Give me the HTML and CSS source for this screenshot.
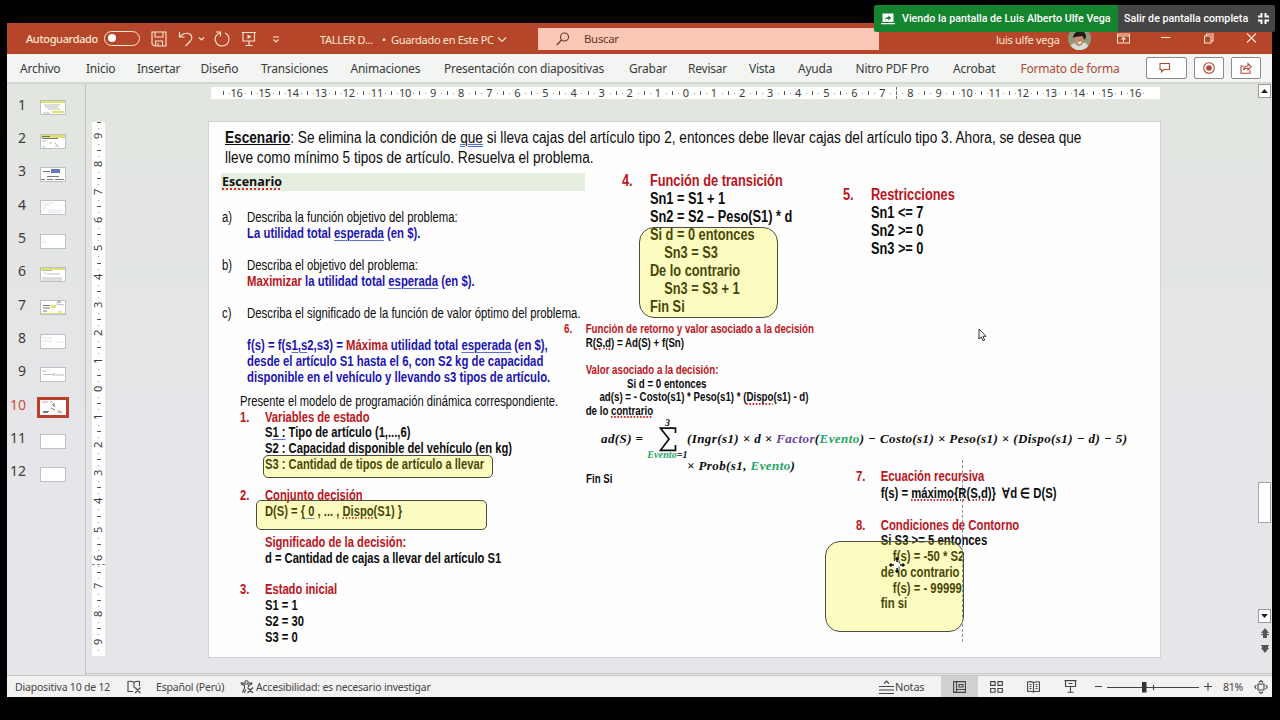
FILE: index.html
```
<!DOCTYPE html>
<html lang="es">
<head>
    <meta charset="UTF-8">
    <meta name="viewport" content="width=device-width, initial-scale=1.0">
    <title>TALLER D... - PowerPoint</title>
    <link rel="stylesheet" href="styles.css">
</head>
<body>
    <div class="window">
        <div class="titlebar">
            <span class="autosave">Autoguardado</span>
            <span class="toggle"></span>
            <svg width="16" height="16" viewBox="0 0 16 16"><path d="M1 1h14v14H3l-2-2zM4 1v5h8V1M4.500 15v-5h7v5M7 12v3"/></svg>
            <svg width="16" height="16" viewBox="0 0 16 16"><path d="M1.500 1v5h5M1.800 6C4 3 7 2 9.500 2.300c5 .7 5.500 5.500 2.500 8.200L7.500 15"/></svg>
            <svg width="7" height="16" viewBox="0 0 7 16"><path d="M1 6.500l2.500 2.500L6 6.500"/></svg>
            <svg width="16" height="16" viewBox="0 0 16 16"><path d="M2 1h4.500v4.500M5.800 2C2 3.800.500 7 1.500 10c1 3 3.500 5 6.500 5 4 0 7-3 7-6.800 0-2.700-1.500-5-4-6.200"/></svg>
            <svg width="16" height="16" viewBox="0 0 16 16"><path d="M1 1.500h14M2 1.500V10h11.500V1.500M8 10v4M4.500 14.500h7"/><path class="fill" d="M6.500 3.500l4 2.300-4 2.300z"/></svg>
            <svg width="8" height="16" viewBox="0 0 8 16"><path d="M1 6h6M1.500 8.500L4 11l2.500-2.500"/></svg>
            <span class="doc">TALLER D...</span>
            <span class="doc">•</span>
            <span class="doc">Guardado en Este PC</span>
            <svg width="10" height="16" viewBox="0 0 10 16"><path d="M1 6.500l4 4 4-4"/></svg>
            <div class="search">
                <svg width="14" height="14" viewBox="0 0 14 14"><circle cx="8.500" cy="5" r="4"/><path d="M5.500 8L.700 13"/></svg>
                <span>Buscar</span>
            </div>
            <span class="user">luis ulfe vega</span>
            <svg class="avatar" width="23" height="23" viewBox="0 0 23 23">
                <clipPath id="face"><circle cx="11.500" cy="11.500" r="11.500"/></clipPath>
                <g clip-path="url(#face)">
                    <rect width="23" height="23" fill="#8d9a7c"/>
                    <path d="M0 23l4-6 6-2 8 1 5 7z" fill="#d5ddd8"/>
                    <ellipse cx="11" cy="12" rx="5" ry="7" fill="#c08a6c"/>
                    <path d="M5 11c0-8 12-10 13-2l-1 4-3-4-7 1z" fill="#241a17"/>
                    <path d="M9 15.500l5-1-2 2.500z" fill="#fff"/>
                </g>
            </svg>
            <svg width="13" height="16" viewBox="0 0 13 16"><path d="M.5 3h12v9H.5zM.5 5h12M6.500 11V6.500M4.500 8.500l2-2 2 2"/></svg>
            <svg width="10" height="16" viewBox="0 0 10 16"><path d="M0 6.500h9.500"/></svg>
            <svg width="10" height="16" viewBox="0 0 10 16"><path d="M.5 5h6.500v7H.5zM2.500 5V3H9v7H7"/></svg>
            <svg width="11" height="16" viewBox="0 0 11 16"><path d="M1 2.500l9 9M10 2.500l-9 9"/></svg>
        </div>

        <div class="tabs">
            <span>Archivo</span>
            <span>Inicio</span>
            <span>Insertar</span>
            <span>Diseño</span>
            <span>Transiciones</span>
            <span>Animaciones</span>
            <span>Presentación con diapositivas</span>
            <span>Grabar</span>
            <span>Revisar</span>
            <span>Vista</span>
            <span>Ayuda</span>
            <span>Nitro PDF Pro</span>
            <span>Acrobat</span>
            <span class="active">Formato de forma</span>
            <div class="tab-buttons">
                <button class="wide"><svg width="12" height="12" viewBox="0 0 12 12"><path d="M1 1.500h9.500v6H5L2.500 10V7.500H1z"/></svg></button>
                <button><svg width="12" height="12" viewBox="0 0 12 12"><circle cx="6" cy="6" r="5.300"/><circle class="fill" cx="6" cy="6" r="2.800"/></svg></button>
                <button><svg width="12" height="12" viewBox="0 0 12 12"><path d="M4 4H1v7.300h9V8M3.500 8c.5-3 2.500-4.200 4.500-4.200V1.500l3.200 3.300L8 8V6c-2 0-3.500.5-4.500 2z"/></svg></button>
            </div>
        </div>

        <div class="main">
            <div class="thumbs">
                <div class="thumb"><b>1</b><svg viewBox="0 0 26 15"><path class="y" d="M1 1h24v2H1zM12 11h12v2H12z"/><path class="g" d="M4 5h16M5 7h13M8 9h12M3 13h7"/></svg></div>
                <div class="thumb"><b>2</b><svg viewBox="0 0 26 15"><path class="y" d="M1 1h24v3H1z"/><path class="k" d="M2 2.500h8M2 4.500h16"/><path class="g" d="M2 7h4M9 9h3M15 12h4M2 13h3M14 8l3 3"/></svg></div>
                <div class="thumb"><b>3</b><svg viewBox="0 0 26 15"><path class="b" d="M11 2h9v4h-9z"/><path class="k" d="M3 4.500h7M7 9.500h12M1 12.500h4M7 12.500h6M15 12.500h9"/></svg></div>
                <div class="thumb"><b>4</b><svg viewBox="0 0 26 15"><path class="l" d="M2 3h12M2 5h8M2 8h5M8 10h15M8 12h14"/></svg></div>
                <div class="thumb"><b>5</b><svg viewBox="0 0 26 15"><path class="l" d="M2 8h4"/></svg></div>
                <div class="thumb"><b>6</b><svg viewBox="0 0 26 15"><path class="y" d="M1 0h24v3H1z"/><path class="g" d="M2 3.500h10M4 6h2M7 7h13M2 11h20M2 13h20"/></svg></div>
                <div class="thumb"><b>7</b><svg viewBox="0 0 26 15"><path class="y" d="M11 5h5v3h-5zM1 13h24v1H1zM1 0h14v1H1z"/><path class="k" d="M3 5.500h7M3 8h7M3 11h4M17 2h4"/><path class="g" d="M16 4l8 1M18 12h4"/></svg></div>
                <div class="thumb"><b>8</b><svg viewBox="0 0 26 15"><path class="l" d="M2 2h2M2 4h10M2 7h10M16 8h7M2 11h3"/></svg></div>
                <div class="thumb"><b>9</b><svg viewBox="0 0 26 15"><path class="g" d="M2 4h4M3 7.500h9M13 6.500h2M12 8h12"/></svg></div>
                <div class="thumb selected"><b>10</b><svg viewBox="0 0 26 15"><path class="k" d="M3 11.500h6M3 12.500h5M12 4l3 3M14 3v3M11 8l4 2M18 12h4"/><path class="r" d="M2 2h6M10 2h3M17 11h3"/></svg></div>
                <div class="thumb"><b>11</b><svg viewBox="0 0 26 15"></svg></div>
                <div class="thumb"><b>12</b><svg viewBox="0 0 26 15"></svg></div>
            </div>

            <div class="workarea">
                <div class="ruler ruler-h" id="rulerH"></div>
                <div class="ruler ruler-v" id="rulerV"></div>

                <div class="slide">
                    <div class="box statement">
                        <p><b class="u">Escenario</b>: Se elimina la condición de <span class="gram">que</span> si lleva cajas del artículo tipo 2, entonces debe llevar cajas del artículo tipo 3. Ahora, se desea que</p>
                        <p>lleve como mínimo 5 tipos de artículo. Resuelva el problema.</p>
                    </div>

                    <div class="heading"><span class="sp">Escenario</span></div>

                    <div class="box questions">
                        <p><i>a)</i>Describa la función objetivo del problema:</p>
                        <p class="blue"><i></i>La utilidad total <span class="gram1">esperada</span> (en $).</p>
                        <br>
                        <p><i>b)</i>Describa el objetivo del problema:</p>
                        <p class="blue"><i></i><span class="red">Maximizar</span> la utilidad total <span class="gram1">esperada</span> (en $).</p>
                        <br>
                        <p><i>c)</i>Describa el significado de la función de valor óptimo del problema.</p>
                        <br>
                        <p class="blue"><i></i>f(s) = f(s<span class="gram1">1,s</span>2,s3) = <span class="red">Máxima</span> utilidad total <span class="gram1">esperada</span> (en $),</p>
                        <p class="blue"><i></i>desde el artículo S1 hasta el 6, con S2 kg de capacidad</p>
                        <p class="blue"><i></i>disponible en el vehículo y llevando s3 tipos de artículo.</p>
                    </div>

                    <div class="box model">
                        <p class="plain">Presente el modelo de programación dinámica correspondiente.</p>
                        <p class="red"><i>1.</i>Variables de estado</p>
                        <p><i></i>S<span class="gram1">1 :</span> Tipo de artículo (1,...,6)</p>
                        <p><i></i>S2 : Capacidad disponible del vehículo (en kg)</p>
                        <p><i></i>S3 : Cantidad de tipos de artículo a llevar</p>
                        <br>
                        <p class="red"><i>2.</i>Conjunto decisión</p>
                        <p><i></i>D(S) = <span class="gram1">{ 0</span> , ... , <span class="sp">Dispo(</span>S1) }</p>
                        <br>
                        <p class="red"><i></i>Significado de la decisión:</p>
                        <p><i></i>d = Cantidad de cajas a llevar del artículo S1</p>
                        <br>
                        <p class="red"><i>3.</i>Estado inicial</p>
                        <p><i></i>S1 = 1</p>
                        <p><i></i>S2 = 30</p>
                        <p><i></i>S3 = 0</p>
                    </div>

                    <div class="box transition">
                        <p class="red"><i>4.</i>Función de transición</p>
                        <p><i></i>Sn1 = S1 + 1</p>
                        <p><i></i>Sn2 = S2 – Peso(S1) * d</p>
                        <p><i></i>Si d = 0 entonces</p>
                        <p class="in"><i></i>Sn3 = S3</p>
                        <p><i></i>De lo contrario</p>
                        <p class="in"><i></i>Sn3 = S3 + 1</p>
                        <p><i></i>Fin Si</p>
                    </div>

                    <div class="box limits">
                        <p class="red"><i>5.</i>Restricciones</p>
                        <p><i></i>Sn1 &lt;= 7</p>
                        <p><i></i>Sn2 &gt;= 0</p>
                        <p><i></i>Sn3 &gt;= 0</p>
                    </div>

                    <div class="box return">
                        <p class="red"><i>6.</i>Función de retorno y valor asociado a la decisión</p>
                        <p><i></i>R(<span class="sp">S,d</span>) = Ad(S) + f(Sn)</p>
                        <br>
                        <p class="red"><i></i>Valor asociado a la decisión:</p>
                        <p class="in2"><i></i>Si d = 0 entonces</p>
                        <p class="in"><i></i>ad(s) = - Costo(s1) * Peso(s1) * (<span class="sp">Dispo</span>(s1) - d)</p>
                        <p><i></i>de lo <span class="sp">contrario</span></p>
                    </div>

                    <div class="formula">
                        <span>ad(S) =</span>
                        <div class="sum">
                            <small>3</small>
                            <svg width="18" height="25" viewBox="0 0 18 25"><path d="M16.500 6V1.200H1.500L10 12 1.500 23.300h15V18"/></svg>
                            <small><em>Evento</em>=1</small>
                        </div>
                        <div class="terms">
                            <p>(Ingr(s1) × d × <span class="purple">Factor</span>(<em>Evento</em>) − Costo(s1) × Peso(s1) × (Dispo(s1) − d) − 5)</p>
                            <p>× Prob(s1, <em>Evento</em>)</p>
                        </div>
                    </div>

                    <div class="box endif">Fin Si</div>

                    <div class="box recursive">
                        <p class="red"><i>7.</i>Ecuación recursiva</p>
                        <p><i></i>f(s) = <span class="sp">máximo{R(S,d)}</span>&nbsp; ∀d ∈ D(S)</p>
                    </div>

                    <div class="box contour">
                        <p class="red"><i>8.</i>Condiciones de Contorno</p>
                        <p><i></i>Si S3 &gt;= 5 entonces</p>
                        <p class="in"><i></i>f(s) = -50 * S2</p>
                        <p><i></i>de lo contrario</p>
                        <p class="in"><i></i>f(s) = - 99999</p>
                        <p><i></i>fin si</p>
                    </div>

                    <div class="mark mark-s3"></div>
                    <div class="mark mark-dispo"></div>
                    <div class="mark mark-sn3"></div>
                    <div class="mark mark-contour"></div>
                    <div class="guide"></div>

                    <svg class="pointer" width="9" height="14" viewBox="0 0 9 14"><path d="M1 1v10l2.300-2 1.700 3.800 1.600-.7L5 8.300h3z"/></svg>
                    <svg class="move" width="16" height="16" viewBox="0 0 16 16"><path class="halo" d="M8 2v12M2 8h12"/><path d="M8 1v4M8 11v4M1 8h4M11 8h4M6.500 2.500L8 .8l1.500 1.700M6.500 13.500L8 15.200l1.500-1.700M2.500 6.500L.8 8l1.700 1.500M13.500 6.500L15.200 8l-1.700 1.500"/></svg>
                </div>

                <div class="scrollbar">
                    <div class="arrow"><svg width="7" height="4" viewBox="0 0 7 4"><path d="M0 4l3.500-4L7 4z"/></svg></div>
                    <div class="handle"></div>
                    <div class="arrow down"><svg width="7" height="4" viewBox="0 0 7 4"><path d="M0 0l3.500 4L7 0z"/></svg></div>
                    <svg class="page" width="8" height="10" viewBox="0 0 8 10"><path d="M0 5l4-5 4 5H6v1h2v1H6v3H2V7H0V6h2V5z"/></svg>
                    <svg class="page" width="8" height="10" viewBox="0 0 8 10"><path d="M0 5l4 5 4-5H7V3H8V2H0v1h1v2z"/></svg>
                </div>
            </div>
        </div>

        <div class="statusbar">
            <span>Diapositiva 10 de 12</span>
            <svg width="15" height="14" viewBox="0 0 15 14"><path d="M7 2.500C5 1 3 1 1 1.500v10h5M7 2.500C9 1 10.500 1 12.500 1.500V6M7 2.500V8M8 7.500l5.500 5.500M13.500 7.500L8 13"/></svg>
            <span>Español (Perú)</span>
            <svg width="14" height="14" viewBox="0 0 14 14"><circle cx="6.500" cy="2.500" r="1.700"/><path d="M1 3.500c1 1 2.500 1.500 3.500 1.700V8L2.500 12.500M12 3.500c-1 1-2.500 1.500-3.500 1.700V7M1 3.500c0-1 1-1 3.500 0M12 3.500c0-1-1-1-3.500 0M4 13l2-3.500M7.500 7.500l5.500 5.500M13 7.500L7.500 13"/></svg>
            <span>Accesibilidad: es necesario investigar</span>
            <svg width="15" height="16" viewBox="0 0 15 16"><path d="M0 7.500h15M0 11h15M0 14.500h15M5 4.500l2.500-2.500L10 4.500"/></svg>
            <span class="notes">Notas</span>
            <div class="view on"><svg width="13" height="12" viewBox="0 0 13 12"><path d="M.6.6h11.800v10.800H.6zM3.500.6v10.800M3.500 8.500h9M6 3.500h4v2.500H6z"/></svg></div>
            <div class="view"><svg width="13" height="12" viewBox="0 0 13 12"><path d="M.6.6h4.500v3.800H.6zM7.900.6h4.500v3.800H7.900zM.6 7.500h4.500v3.800H.6zM7.900 7.500h4.500v3.800H7.900z"/></svg></div>
            <div class="view"><svg width="13" height="12" viewBox="0 0 13 12"><path d="M6.500 1.500C4.500.5 2.500.5.6 1v9.500c2-.5 4-.5 5.900.5 1.900-1 3.900-1 5.900-.5V1c-2-.5-4-.5-5.900.5zM6.500 1.500V11M2.500 3.500h2M2.500 5.500h2M2.500 7.500h2M8.500 3.500h2M8.500 5.500h2M8.500 7.500h2"/></svg></div>
            <div class="view"><svg width="13" height="13" viewBox="0 0 13 13"><path d="M.5.600h12M1.500.6v5.900h10V.6M4.500 3.500h4M6.500 6.500V12M3.500 12.300h6"/></svg></div>
            <svg class="zoom" width="118" height="14" viewBox="0 0 118 14"><path d="M0 6.500h7M12 7.500h92M58.500 5v5M109 6.500h8M113 2.500v8"/><path class="knob" d="M47 2h4.500v10.500H47z"/></svg>
            <span class="pct">81%</span>
            <svg width="14" height="14" viewBox="0 0 14 14"><path d="M4 4h6v6H4zM5 2.300L7 .7l2 1.600M5 11.700l2 1.600 2-1.600M2.300 5L.7 7l1.600 2M11.700 5l1.600 2-1.600 2"/></svg>
        </div>
    </div>

    <div class="share-bar">
        <div class="viewing">
            <svg width="14" height="12" viewBox="0 0 14 12"><path fill="#fff" d="M1.500.5h11v8.500h-11zM0 10h14v1.300H0z"/><path fill="#15842f" d="M4 7c.3-2 1.500-2.800 3.300-2.900V2.500L10.300 5 7.300 7.400V5.800C5.800 5.800 4.800 6.100 4 7z"/></svg>
            <span>Viendo la pantalla de Luis Alberto Ulfe Vega</span>
        </div>
        <div class="exit">
            <span>Salir de pantalla completa</span>
            <svg width="11" height="11" viewBox="0 0 11 11"><path d="M3.500 0v3.500H0M7.500 0v3.500H11M3.500 11V7.500H0M7.500 11V7.500H11"/></svg>
        </div>
    </div>

    <script>
        // numbers run from max down to 0 and back up to max
        function fillRuler(id, max) {
            const ruler = document.getElementById(id);
            for (let i = -max; i <= max; i++) {
                const mark = document.createElement('div');
                const num = document.createElement('span');
                num.textContent = Math.abs(i);
                mark.appendChild(num);
                ruler.appendChild(mark);
            }
        }
        fillRuler('rulerH', 16);
        fillRuler('rulerV', 9);
    </script>
</body>
</html>
```

FILE: styles.css
```
* {
    box-sizing: border-box;
}
body {
    margin: 0;
    width: 1280px;
    height: 720px;
    overflow: hidden;
    background: #000;
    font-family: 'Noto Sans', sans-serif;
    font-size: 12px;
    color: #3b3b3b;
}
p {
    margin: 0;
}
svg {
    display: block;
    fill: none;
    stroke: currentColor;
    stroke-width: 1.1;
}
svg .fill {
    fill: currentColor;
    stroke: none;
}
.window {
    width: 1265px;
    height: 674px;
    margin: 23px 0 0 7px;
    display: flex;
    flex-direction: column;
    background: #e5e5e7;
}

/* title bar */
.titlebar {
    height: 31px;
    padding-left: 19px;
    display: grid;
    grid-template-columns: 78px 47px 27px 20px 16px 27px 31px 48px 62px 9px 106px 41px 458px 72px 49px 44px 43px 42px 19px;
    align-items: center;
    white-space: nowrap;
    background: #b5462a;
    color: #fde6cf;
}
.autosave {
    font-size: 11px;
    font-weight: 500;
    letter-spacing: -.35px;
}
.toggle {
    width: 36px;
    height: 15px;
    border: 1.5px solid #fde6cf;
    border-radius: 8px;
}
.toggle::before {
    content: "";
    display: block;
    width: 8px;
    height: 8px;
    margin: 2px 3px;
    border-radius: 50%;
    background: #fff;
}
.doc {
    font-size: 11px;
    letter-spacing: -.3px;
    padding-top: 1px;
}
.search {
    width: 341px;
    height: 22px;
    padding-left: 18px;
    display: flex;
    align-items: center;
    gap: 14px;
    background: #fac8b4;
    color: #74301f;
    font-size: 11.5px;
    letter-spacing: -.35px;
}
.user {
    font-size: 11px;
    letter-spacing: -.3px;
    padding-top: 1px;
}
.avatar {
    stroke: none;
}

/* ribbon tabs */
.tabs {
    height: 28px;
    padding-left: 13px;
    display: grid;
    grid-template-columns: 66px 51px 63.5px 60.5px 89.5px 93.5px 185px 59px 61px 49px 57.5px 97.5px 67.5px 125.5px auto;
    align-items: center;
    white-space: nowrap;
    letter-spacing: -.23px;
    background: #f2f5f1;
}
.tabs .active {
    color: #b04a35;
}
.tab-buttons {
    display: flex;
    gap: 7px;
}
.tab-buttons button {
    width: 30px;
    height: 22px;
    padding: 0;
    display: flex;
    align-items: center;
    justify-content: center;
    background: #fff;
    border: 1px solid #8b8b8b;
    border-radius: 2px;
    color: #b04a35;
}
.tab-buttons .wide {
    width: 41px;
    padding-right: 4px;
}

/* main area */
.main {
    flex: 1;
    display: flex;
    border-top: 2px solid #d5d9d6;
    border-bottom: 1px solid #c4c4c4;
    background: linear-gradient(#e2e6df, #e3e5e6 35%, #e6e5e9 60%);
}
.thumbs {
    width: 79px;
    padding-top: 4px;
    border-right: 1px solid #bfc1c0;
}
.thumb {
    height: 33.350px;
    display: flex;
    align-items: center;
}
.thumb b {
    width: 19px;
    margin-right: 14px;
    font-size: 14px;
    font-weight: 400;
    line-height: 28px;
    text-align: right;
}
.thumb svg {
    width: 26px;
    height: 15px;
    margin-top: 6px;
    background: #fff;
    outline: 1px solid #bcbfc4;
    outline-offset: -1px;
    stroke-width: .8;
}
.thumb .y { fill: #dfe26a; stroke: none; }
.thumb .b { fill: #6b78b8; stroke: none; }
.thumb .k { stroke: #55565e; }
.thumb .g { stroke: #a9aba6; }
.thumb .l { stroke: #d8dde4; }
.thumb .r { stroke: #d9877a; }
.thumb.selected b {
    color: #c8503c;
}
.thumb.selected svg {
    outline: 3px solid #b8402d;
    outline-offset: 0;
}
.workarea {
    position: relative;
    flex: 1;
    border-bottom: 1px solid #c9c9cb;
    margin-bottom: 1px;
}

/* rulers */
.ruler {
    position: absolute;
    display: flex;
    background: #fff;
    font-size: 11px;
    line-height: 12px;
    letter-spacing: -.2px;
}
.ruler div {
    flex: 1;
    display: flex;
    align-items: center;
    justify-content: center;
}
.ruler-h {
    left: 125px;
    top: 3px;
    width: 949px;
    height: 12px;
    padding: 0 11px 0 11.500px;
}
.ruler-h div {
    background:
        linear-gradient(#555, #555) 0 50% / 1px 4px no-repeat,
        linear-gradient(#999, #999) 6px 50% / 1px 1px no-repeat,
        linear-gradient(#999, #999) 22px 50% / 1px 1px no-repeat;
}
.ruler-h::after {
    content: "";
    position: absolute;
    left: 685px;
    top: 0;
    height: 12px;
    border-left: 1px dashed #777;
}
.ruler-v {
    left: 6px;
    top: 38px;
    width: 13px;
    height: 534px;
    flex-direction: column;
}
.ruler-v div {
    background:
        linear-gradient(#555, #555) 50% 0 / 4px 1px no-repeat,
        linear-gradient(#999, #999) 50% 6px / 1px 1px no-repeat,
        linear-gradient(#999, #999) 50% 22px / 1px 1px no-repeat;
}
.ruler-v span {
    transform: rotate(-90deg);
}
.ruler-v::after {
    content: "";
    position: absolute;
    top: 442px;
    width: 13px;
    border-top: 1px dashed #888;
}

/* slide: every text box has its own place on it */
.slide {
    position: absolute;
    left: 123px;
    top: 38px;
    width: 951px;
    height: 535px;
    background: #fefefe;
    box-shadow: 0 0 0 1px #d3d4d6;
    color: #0c0c0c;
}
.box {
    position: absolute;
    font-family: 'Liberation Sans', Arial, sans-serif;
    font-weight: 700;
    white-space: nowrap;
    transform: scaleX(.82);
    transform-origin: 0 0;
}
.box i {
    display: inline-block;
    width: 30.5px;
    font-style: normal;
}
.red { color: #bb1420; }
.box .blue { color: #1b14b4; font-weight: 700; }
.purple { color: #6a3fa0; }
.u { text-decoration: underline; }
.gram { text-decoration: underline double #4a6fd0; text-decoration-thickness: 1px; }
.gram1 { text-decoration: underline #5a70d0; text-decoration-thickness: 1px; text-underline-offset: 2px; }
.sp { text-decoration: underline dotted #d03030; text-decoration-thickness: 1.5px; text-underline-offset: 2px; }

.statement {
    left: 16px;
    top: 6px;
    font-size: 16.65px;
    font-weight: 400;
    line-height: 19.5px;
}
.heading {
    position: absolute;
    left: 12px;
    top: 51px;
    width: 364px;
    height: 18px;
    padding-left: 1px;
    font: 700 12.5px/18px 'Open Sans', sans-serif;
    color: #111;
    background: #e6eee0;
}
.questions {
    left: 13px;
    top: 88px;
    font-size: 14px;
    font-weight: 400;
    line-height: 15.95px;
    transform: scaleX(.81);
}
.questions i { width: 31px; }
.model {
    left: 31px;
    top: 272px;
    font-size: 14px;
    line-height: 15.7px;
    transform: scaleX(.8);
}
.model i { width: 31.2px; }
.plain { font-weight: 400; }
.transition {
    left: 413px;
    top: 50px;
    font-size: 15.6px;
    line-height: 17.95px;
}
.limits {
    left: 634px;
    top: 64px;
    font-size: 15.6px;
    line-height: 17.95px;
}
.transition i,
.limits i { width: 34px; }
.transition .in { padding-left: 17.5px; }
.return {
    left: 355px;
    top: 201px;
    font-size: 12px;
    line-height: 13.65px;
    transform: scaleX(.809);
}
.return i { width: 26.8px; }
.return .in { padding-left: 17px; }
.return .in2 { padding-left: 51px; }
.endif {
    left: 377px;
    top: 350px;
    font-size: 12px;
    line-height: 14px;
    transform: scaleX(.809);
}
.recursive {
    left: 647px;
    top: 345.5px;
    font-size: 14px;
    line-height: 17.2px;
    transform: scaleX(.808);
}
.contour {
    left: 647px;
    top: 395.5px;
    font-size: 14px;
    line-height: 15.8px;
    transform: scaleX(.81);
}
.contour .in { padding-left: 15px; }

.formula {
    position: absolute;
    left: 392px;
    top: 295px;
    display: flex;
    font: italic 700 13px/26.5px 'Liberation Serif', 'Times New Roman', serif;
    letter-spacing: .41px;
    white-space: nowrap;
}
.formula > span {
    width: 47px;
    padding-top: 9px;
}
.formula em { color: #1fa565; }
.sum {
    width: 39px;
    display: flex;
    flex-direction: column;
    align-items: center;
}
.sum small {
    font-size: 10px;
    line-height: 12px;
    letter-spacing: .1px;
}
.sum svg { margin: -2px 0 -3px; stroke-width: 1.7; }
.terms { padding-top: 9px; }

.mark {
    position: absolute;
    background: rgba(245, 245, 0, .24);
    border: 1.5px solid #4b4b42;
    border-radius: 5px;
}
.mark-s3 { left: 54px; top: 333px; width: 230px; height: 23px; }
.mark-dispo { left: 47px; top: 378px; width: 231px; height: 30px; }
.mark-sn3 { left: 430px; top: 105px; width: 139px; height: 91px; border-radius: 15px; }
.mark-contour { left: 616px; top: 419px; width: 139px; height: 91px; border-radius: 15px; }
.guide {
    position: absolute;
    left: 753px;
    top: 338px;
    height: 182px;
    border-left: 1px dashed #8e9096;
}
.pointer {
    position: absolute;
    left: 769px;
    top: 206px;
    fill: #fff;
    color: #333;
    stroke-width: 1;
}
.move {
    position: absolute;
    left: 680px;
    top: 435px;
    color: #111;
    stroke-width: 1.5;
}
.move .halo { stroke: #fff; stroke-width: 3; }

/* scroll bar */
.scrollbar {
    position: absolute;
    right: 1px;
    top: 0;
    width: 13px;
    height: 570px;
    display: flex;
    flex-direction: column;
    align-items: center;
    color: #222;
}
.scrollbar svg { fill: currentColor; stroke: none; }
.arrow {
    width: 13px;
    height: 14px;
    display: flex;
    align-items: center;
    justify-content: center;
    background: #fff;
    border: 1px solid #999;
}
.handle {
    width: 13px;
    height: 41px;
    margin: 384px 0 86px;
    background: #fff;
    border: 1px solid #a5a5a5;
}
.scrollbar .page { margin-top: 5px; color: #555; }

/* status bar */
.statusbar {
    height: 21px;
    padding-left: 8px;
    display: grid;
    grid-template-columns: 112px 29px 84px 16px 623px 16px 46px 37px 37px 37px 43px 128px 31px 18px;
    align-items: center;
    white-space: nowrap;
    background: #f3f2f2;
    font-size: 10.5px;
    letter-spacing: -.2px;
    color: #444;
}
.notes { font-size: 11px; }
.view {
    width: 37px;
    height: 21px;
    display: flex;
    align-items: center;
    justify-content: center;
}
.view.on { background: #d2d1d0; }
.zoom .knob { fill: #333; stroke: none; }

/* screen sharing notice */
.share-bar {
    position: absolute;
    left: 874px;
    top: 5px;
    width: 401px;
    height: 27px;
    display: flex;
    font: 500 10.7px/27px Roboto, sans-serif;
    color: #fff;
    white-space: nowrap;
    border-radius: 2px;
    overflow: hidden;
}
.viewing {
    width: 244px;
    padding-left: 7px;
    display: flex;
    align-items: center;
    gap: 7px;
    background: #15842f;
}
.viewing svg { stroke: none; }
.exit {
    flex: 1;
    padding-left: 6px;
    display: flex;
    align-items: center;
    gap: 10px;
    background: #454545;
}
.exit svg { stroke-width: 2; }
```
